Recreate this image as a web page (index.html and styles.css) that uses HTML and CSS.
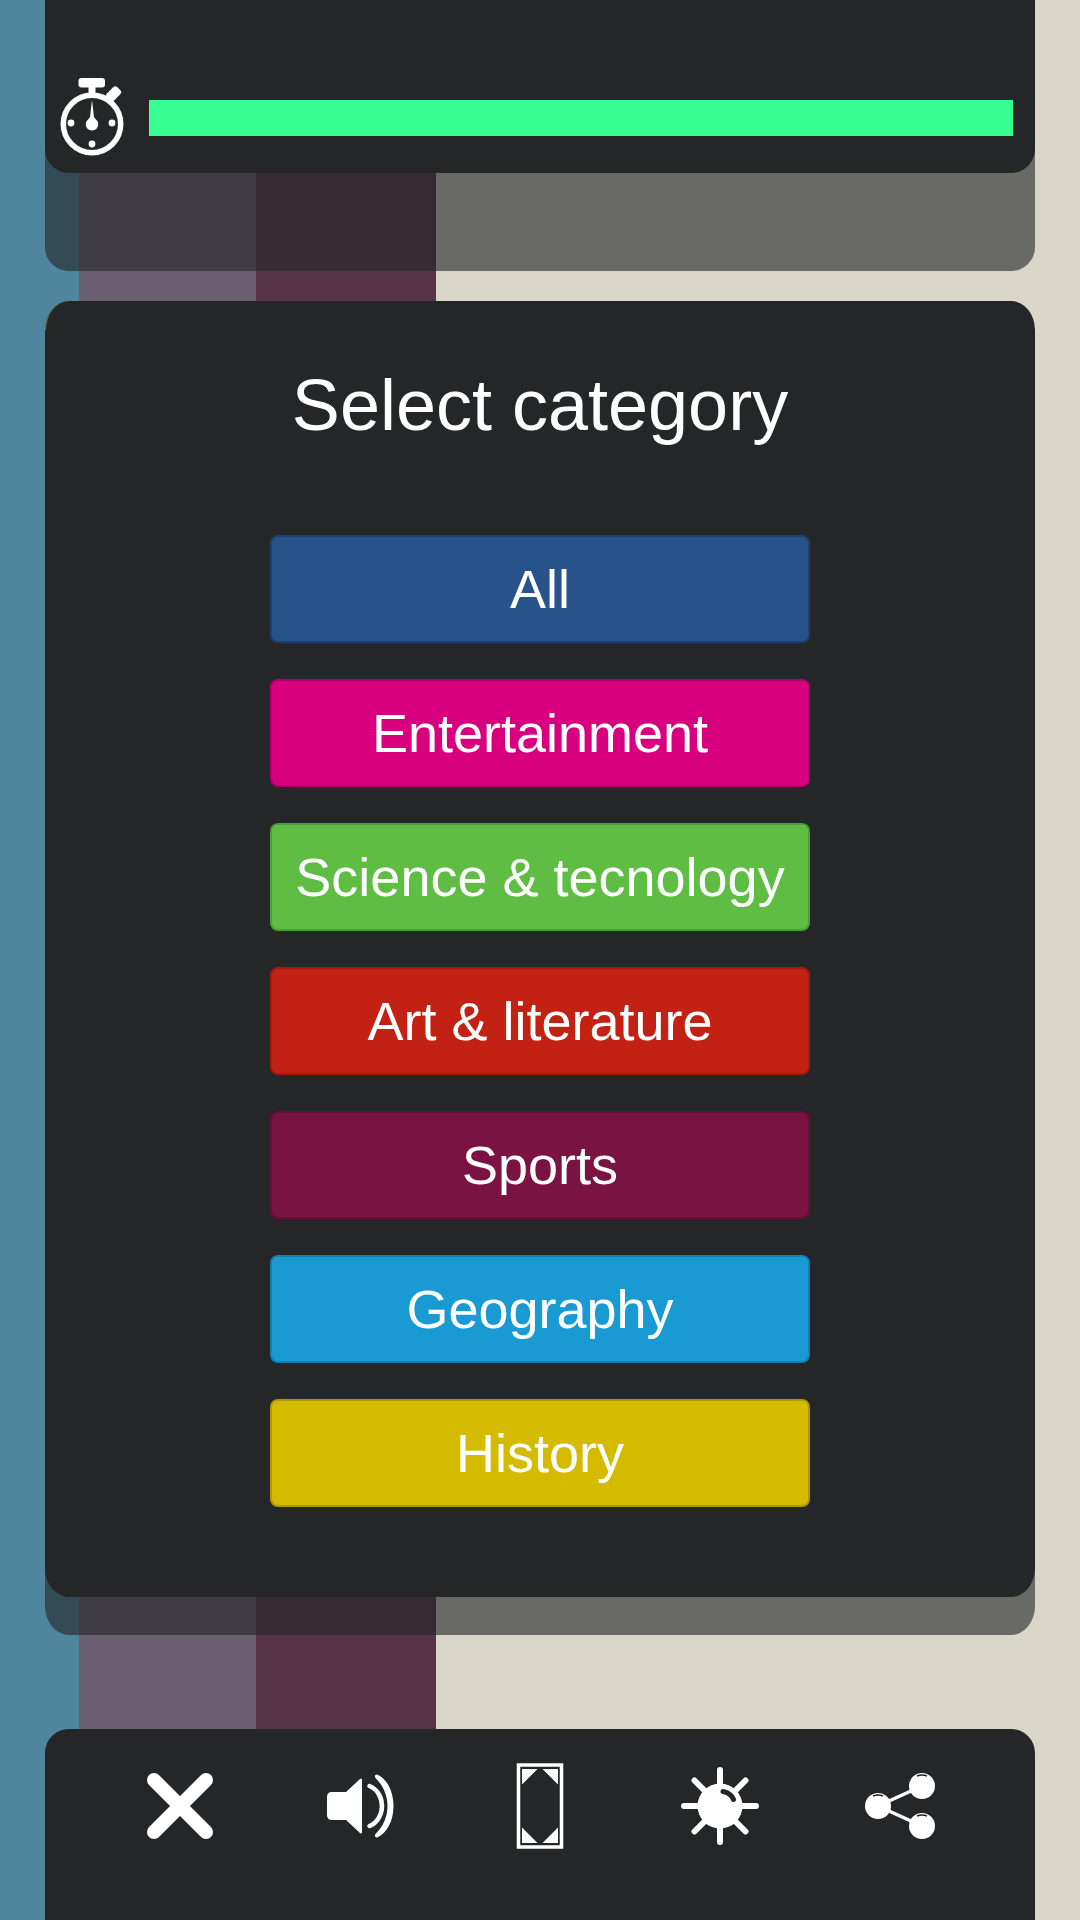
FILE: index.html
```html
<!DOCTYPE html>
<html lang="en">
<head>
<meta charset="utf-8">
<title>Select category</title>
<link rel="stylesheet" href="styles.css">
</head>
<body>
<div class="page">
  <header class="timer-panel">
    <svg class="timer-icon" viewBox="0 0 80 90" aria-hidden="true">
      <rect class="fill" x="18.500" y="8" width="26.500" height="9.500" rx="3"/>
      <path class="fill" d="M28.500 15 H35.500 V25 H28.500 Z"/>
      <rect class="fill" x="46" y="19" width="15" height="10" rx="3" transform="rotate(-45 53.500 24)"/>
      <circle class="ring" cx="32" cy="54" r="28.700"/>
      <path class="fill" d="M32 30 L34 47 L35.500 49 A6.300 6.300 0 1 1 28.500 49 L30 47 Z"/>
      <circle class="fill" cx="11" cy="53" r="3.400"/>
      <circle class="fill" cx="52" cy="53" r="3.400"/>
      <circle class="fill" cx="32" cy="74" r="3.400"/>
    </svg>
    <div class="timer-bar"></div>
  </header>

  <main class="category-panel">
    <h1 class="title">Select category</h1>
    <div class="category-list">
      <button class="category cat-all">All</button>
      <button class="category cat-ent">Entertainment</button>
      <button class="category cat-sci">Science &amp; tecnology</button>
      <button class="category cat-art">Art &amp; literature</button>
      <button class="category cat-spo">Sports</button>
      <button class="category cat-geo">Geography</button>
      <button class="category cat-his">History</button>
    </div>
  </main>

  <footer class="toolbar">
    <div class="tool">
      <svg class="tool-icon" viewBox="0 0 100 100" aria-hidden="true">
        <path class="cross" d="M24 24 L76 76 M76 24 L24 76"/>
      </svg>
    </div>
    <div class="tool">
      <svg class="tool-icon" viewBox="0 0 100 100" aria-hidden="true">
        <path class="fill" d="M22 36 H36 L50 23 Q52 21.500 52 24 V76 Q52 78.500 50 77 L36 64 H22 Q17 64 17 59 V41 Q17 36 22 36 Z"/>
        <path class="wave" d="M59.500 30 C67 33 72 41 72 50 C72 59 67 67 59.500 70"/>
        <path class="fill" d="M67 18.500 C77.500 23 83.500 36 83.500 50 C83.500 64 77.500 77 67 81.500 C65 82 64 79 66 77.500 C73.500 70 77.500 60 77.500 50 C77.500 40 73.500 30 66 22.500 C64 21 65 18 67 18.500 Z"/>
      </svg>
    </div>
    <div class="tool">
      <svg class="tool-icon" viewBox="0 0 100 100" aria-hidden="true">
        <rect class="frame" x="28.500" y="9" width="43" height="82"/>
        <path class="fill" d="M32 13 H47.500 L32 28.500 Z M68 13 H52.500 L68 28.500 Z M32 87 H47.500 L32 71.500 Z M68 87 H52.500 L68 71.500 Z"/>
      </svg>
    </div>
    <div class="tool">
      <svg class="tool-icon" viewBox="0 0 100 100" aria-hidden="true">
        <path class="ray" d="M50 14 V28 M50 72 V86 M14 50 H28 M72 50 H86 M24.500 24.500 L34 34 M75.500 24.500 L66 34 M24.500 75.500 L34 66 M75.500 75.500 L66 66"/>
        <circle class="fill" cx="50" cy="50" r="22.500"/>
        <path class="glint" d="M53 35.500 Q61 37 63.500 43.500"/>
      </svg>
    </div>
    <div class="tool">
      <svg class="tool-icon" viewBox="0 0 100 100" aria-hidden="true">
        <path class="link" d="M28 50 L72 30 M28 50 L72 70"/>
        <circle class="fill" cx="28" cy="50" r="13"/>
        <circle class="fill" cx="72" cy="30" r="13"/>
        <circle class="fill" cx="72" cy="70" r="13"/>
        <path class="glint-thin" d="M23 40 Q28 38 33 40 M67 20 Q72 18 77 20 M67 60 Q72 58 77 60"/>
      </svg>
    </div>
  </footer>
</div>
</body>
</html>
```

FILE: styles.css
```css
* {
  box-sizing: border-box;
}

html,
body {
  margin: 0;
  padding: 0;
}

body {
  font-family: "Liberation Sans", Arial, sans-serif;
  color: #fff;
}

.page {
  width: 1080px;
  height: 1920px;
  overflow: hidden;
  padding: 0 45px;
  display: flex;
  flex-direction: column;
  background: linear-gradient(90deg, #50869d 79px, #6b5e70 79px 256px, #573445 256px 436px, #d9d5c8 436px);
}

.timer-panel {
  flex: none;
  height: 173px;
  margin-bottom: 128px;
  padding: 70px 22px 0 15px;
  display: flex;
  align-items: flex-start;
  gap: 9px;
  background: #242628;
  border-radius: 0 0 24px 24px;
  box-shadow: 0 98px 0 rgba(36, 38, 40, 0.62);
}

.timer-icon {
  flex: none;
  width: 80px;
  height: 90px;
}

.timer-bar {
  flex: 1;
  height: 36px;
  margin-top: 30px;
  background: #38ff92;
}

.category-panel {
  position: relative;
  flex: none;
  height: 1296px;
  margin-bottom: 132px;
  padding-top: 62px;
  display: flex;
  flex-direction: column;
  align-items: center;
  background: #242628;
  border-radius: 24px / 29px;
  box-shadow: 0 38px 0 rgba(36, 38, 40, 0.62);
}

.category-panel::before {
  content: "";
  position: absolute;
  left: 0;
  top: 0;
  width: 24px;
  height: 29px;
  border-left: 1.500px solid #4e8f42;
  border-top-left-radius: 24px 29px;
}

.title {
  margin: 0 0 88px;
  height: 84px;
  font-size: 72px;
  font-weight: 400;
  line-height: 84px;
}

.category-list {
  display: flex;
  flex-direction: column;
  gap: 36px;
}

.category {
  width: 540px;
  height: 108px;
  padding: 0;
  font-family: inherit;
  font-size: 54px;
  color: #fff;
  border: 2px solid;
  border-radius: 8px;
}

.cat-all { background: #28528a; border-color: #1f4070; }
.cat-ent { background: #d9007f; border-color: #b30069; }
.cat-sci { background: #5fbd44; border-color: #4d9c37; }
.cat-art { background: #c32113; border-color: #a11b10; }
.cat-spo { background: #7a1242; border-color: #640f36; }
.cat-geo { background: #1a9ad3; border-color: #1580b0; }
.cat-his { background: #d4bb00; border-color: #ae9a00; }

.toolbar {
  flex: 1;
  padding: 27px 45px 0;
  display: grid;
  grid-template-columns: repeat(5, 180px);
  align-items: start;
  background: #242628;
  border-radius: 24px 24px 0 0;
}

.tool {
  display: flex;
  justify-content: center;
}

.tool-icon {
  width: 100px;
  height: 100px;
}

.fill {
  fill: #fff;
}

.ring {
  fill: none;
  stroke: #fff;
  stroke-width: 5.500px;
}

.cross {
  fill: none;
  stroke: #fff;
  stroke-width: 14px;
  stroke-linecap: round;
}

.wave {
  fill: none;
  stroke: #fff;
  stroke-width: 4.500px;
  stroke-linecap: round;
}

.frame {
  fill: none;
  stroke: #fff;
  stroke-width: 3.500px;
}

.ray {
  fill: none;
  stroke: #fff;
  stroke-width: 6px;
  stroke-linecap: round;
}

.glint {
  fill: none;
  stroke: #242628;
  stroke-width: 5px;
  stroke-linecap: round;
}

.link {
  fill: none;
  stroke: #fff;
  stroke-width: 3.500px;
}

.glint-thin {
  fill: none;
  stroke: #242628;
  stroke-width: 1.500px;
}
```
